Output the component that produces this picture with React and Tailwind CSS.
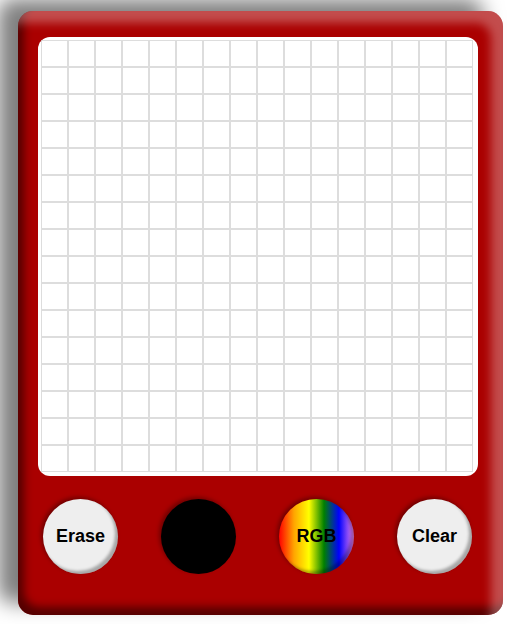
import React from 'react';

const cells = Array.from({ length: 256 }, (_, i) => i);

const Knob = ({ label, className }) => (
  <button
    className={`w-[75px] h-[75px] rounded-full flex items-center justify-center text-[18px] font-bold text-black shadow-[inset_-3px_-3px_3px_rgba(0,0,0,0.3),-2px_-2px_4px_rgba(0,0,0,0.35)] ${className}`}
  >
    {label}
  </button>
);

const App = () => {
  return (
    <div className="w-[515px] h-[624px] bg-white overflow-hidden pt-[11px] pl-[18px] font-['Liberation_Sans',Arial,sans-serif]">
      <div className="w-[485px] h-[604px] rounded-[15px] bg-[#aa0000] shadow-[inset_-12px_12px_10px_rgba(255,255,255,0.3),inset_6px_-8px_8px_rgba(0,0,0,0.5),-20px_-12px_20px_rgba(0,0,0,0.5)] pt-[26px] pl-[20px]">
        <div className="w-[440px] h-[439px] bg-white rounded-[12px] overflow-hidden pt-[3px] pl-[3px]">
          <div className="grid grid-cols-[repeat(16,27px)] auto-rows-[27px]">
            {cells.map((i) => (
              <div key={i} className="border border-[#dddddd]" />
            ))}
          </div>
        </div>

        <div className="flex mt-[23px] pl-[5px] gap-[43px]">
          <Knob label="Erase" className="bg-[#eeeeee]" />
          <div className="w-[75px] h-[75px] rounded-full bg-black shadow-[-2px_-2px_4px_rgba(0,0,0,0.35)]" />
          <Knob
            label="RGB"
            className="bg-[linear-gradient(to_right,red,orange,yellow,green,blue,violet)]"
          />
          <Knob label="Clear" className="bg-[#eeeeee]" />
        </div>
      </div>
    </div>
  );
};

export default App;
